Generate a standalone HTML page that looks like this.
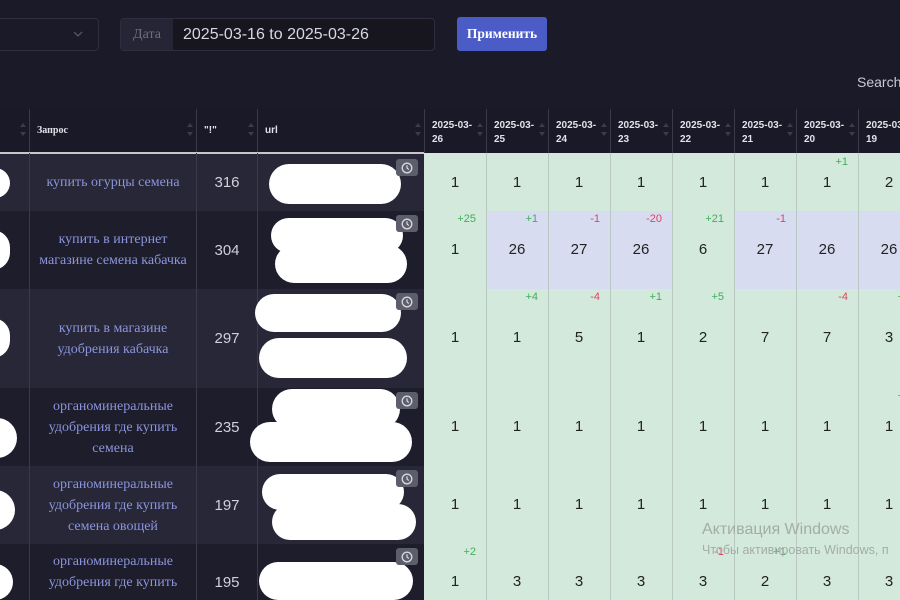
<!DOCTYPE html>
<html><head><meta charset="utf-8"><style>
*{margin:0;padding:0;box-sizing:border-box}
html,body{width:900px;height:600px;overflow:hidden}
body{background:#1b1a28;font-family:"Liberation Sans","DejaVu Sans",sans-serif;position:relative}
.a{position:absolute}
.sel{left:-10px;top:18px;width:109px;height:33px;border:1px solid #2e2e3e;border-radius:4px;background:#1b1a28}
.dg{left:120px;top:18px;width:315px;height:33px;border:1px solid #2e2e3e;border-radius:4px;background:#17161f;overflow:hidden}
.dl{left:0;top:0;width:52px;height:100%;background:#252535;color:#6d6e80;font-family:"Liberation Serif",serif;font-size:14px;line-height:31px;text-align:center}
.dv{left:62px;top:0;color:#d6d7e2;font-size:16px;line-height:31px}
.btn{left:457px;top:17px;width:90px;height:34px;background:#4b5cc6;border-radius:3px;color:#fff;font-family:"Liberation Serif",serif;font-weight:bold;font-size:13.5px;line-height:34px;text-align:center}
.srch{left:857px;top:74px;color:#c8c9d6;font-size:14px}
.hd{top:109px;height:44px;background:#1a1927;border-left:1px solid #3a3a48;color:#e2e2ea;font-size:10px;font-weight:bold}
.hd span{position:absolute;left:7px;top:10px;line-height:14px}
.sort{position:absolute;right:9px;top:15px;width:0;height:0}
.sort:before{content:"";position:absolute;left:0;top:0;border:3px solid transparent;border-bottom:4px solid #3c3c4a;transform:translateY(-4px)}
.sort:after{content:"";position:absolute;left:0;top:8px;border:3px solid transparent;border-top:4px solid #3c3c4a}
.line{left:0;top:152px;width:424px;height:1.5px;background:#c6c6cc}
.c{border-left:1px solid #3a3a48}
.q{color:#8b95dd;font-family:"Liberation Serif",serif;font-size:14px;line-height:21px;text-align:center;display:flex;align-items:center;justify-content:center;overflow:hidden}
.n{color:#d0d1dc;font-size:15px;display:flex;align-items:center;justify-content:center}
.v{color:#222;font-size:15px;width:62px;text-align:center}
.d{font-size:11px;width:50px;text-align:right}
.p{color:#3fae5c}.m{color:#e0445a}
.blob{background:#fff;border-radius:30px}
.clk{width:22px;height:17px;background:#5d5e6b;border-radius:3px}
.clk svg{position:absolute;left:5px;top:2.5px}
.win{color:#a4aca7}
</style></head><body>
<div class="a sel"><svg class="a" style="left:82px;top:12px" width="10" height="7"><path d="M1 1L5 5L9 1" stroke="#555566" fill="none" stroke-width="1.3"/></svg></div>
<div class="a dg"><div class="a dl">Дата</div><div class="a dv">2025-03-16 to 2025-03-26</div></div>
<div class="a btn">Применить</div>
<div class="a srch">Search</div>

<div class="a hd" style="left:-1px;width:30px"><div class="sort"></div></div>
<div class="a hd" style="left:29px;width:167px"><span style="font-family:'Liberation Serif',serif;top:15px">Запрос</span><div class="sort"></div></div>
<div class="a hd" style="left:196px;width:61px"><span style="top:15px">"!"</span><div class="sort"></div></div>
<div class="a hd" style="left:257px;width:167px"><span style="top:15px">url</span><div class="sort"></div></div>
<div class="a hd" style="left:424px;width:62px"><span>2025-03-<br>26</span><div class="sort"></div></div>
<div class="a hd" style="left:486px;width:62px"><span>2025-03-<br>25</span><div class="sort"></div></div>
<div class="a hd" style="left:548px;width:62px"><span>2025-03-<br>24</span><div class="sort"></div></div>
<div class="a hd" style="left:610px;width:62px"><span>2025-03-<br>23</span><div class="sort"></div></div>
<div class="a hd" style="left:672px;width:62px"><span>2025-03-<br>22</span><div class="sort"></div></div>
<div class="a hd" style="left:734px;width:62px"><span>2025-03-<br>21</span><div class="sort"></div></div>
<div class="a hd" style="left:796px;width:62px"><span>2025-03-<br>20</span><div class="sort"></div></div>
<div class="a hd" style="left:858px;width:62px"><span>2025-03-<br>19</span><div class="sort"></div></div>
<div class="a line"></div>

<div class="a" style="left:0;top:153.5px;width:424px;height:57.5px;background:#272737"></div>
<div class="a" style="left:0;top:211px;width:424px;height:78px;background:#1e1d2b"></div>
<div class="a" style="left:0;top:289px;width:424px;height:99px;background:#272737"></div>
<div class="a" style="left:0;top:388px;width:424px;height:78px;background:#1e1d2b"></div>
<div class="a" style="left:0;top:466px;width:424px;height:78px;background:#272737"></div>
<div class="a" style="left:0;top:544px;width:424px;height:56px;background:#1e1d2b"></div>
<div class="a c" style="left:29px;top:153px;width:1px;height:447px"></div>
<div class="a c" style="left:196px;top:153px;width:1px;height:447px"></div>
<div class="a c" style="left:257px;top:153px;width:1px;height:447px"></div>

<div class="a q" style="left:30px;top:153px;width:166px;height:58px">купить огурцы семена</div>
<div class="a q" style="left:30px;top:211px;width:166px;height:78px">купить в интернет<br>магазине семена кабачка</div>
<div class="a q" style="left:30px;top:289px;width:166px;height:99px">купить в магазине<br>удобрения кабачка</div>
<div class="a q" style="left:30px;top:388px;width:166px;height:78px">органоминеральные<br>удобрения где купить<br>семена</div>
<div class="a q" style="left:30px;top:466px;width:166px;height:78px">органоминеральные<br>удобрения где купить<br>семена овощей</div>
<div class="a q" style="left:30px;top:544px;width:166px;height:56px;align-items:flex-start;padding-top:7px">органоминеральные<br>удобрения где купить</div>

<div class="a n" style="left:197px;top:153px;width:60px;height:58px">316</div>
<div class="a n" style="left:197px;top:211px;width:60px;height:78px">304</div>
<div class="a n" style="left:197px;top:289px;width:60px;height:99px">297</div>
<div class="a n" style="left:197px;top:388px;width:60px;height:78px">235</div>
<div class="a n" style="left:197px;top:466px;width:60px;height:78px">197</div>
<div class="a n" style="left:197px;top:572px;width:60px;height:20px">195</div>

<div class="a blob" style="left:-20px;top:168px;width:30px;height:30px"></div>
<div class="a blob" style="left:-25px;top:230px;width:35px;height:40px"></div>
<div class="a blob" style="left:-25px;top:318px;width:35px;height:40px"></div>
<div class="a blob" style="left:-25px;top:418px;width:42px;height:40px"></div>
<div class="a blob" style="left:-25px;top:490px;width:40px;height:40px"></div>
<div class="a blob" style="left:-25px;top:564px;width:38px;height:36px"></div>
<div class="a blob" style="left:269px;top:164px;width:132px;height:40px"></div>
<div class="a blob" style="left:271px;top:218px;width:132px;height:35px"></div>
<div class="a blob" style="left:275px;top:245px;width:132px;height:38px"></div>
<div class="a blob" style="left:255px;top:294px;width:146px;height:38px"></div>
<div class="a blob" style="left:259px;top:338px;width:148px;height:40px"></div>
<div class="a blob" style="left:272px;top:389px;width:128px;height:40px"></div>
<div class="a blob" style="left:250px;top:422px;width:162px;height:40px"></div>
<div class="a blob" style="left:262px;top:474px;width:142px;height:36px"></div>
<div class="a blob" style="left:272px;top:504px;width:144px;height:36px"></div>
<div class="a blob" style="left:259px;top:562px;width:154px;height:38px"></div>

<div class="a clk" style="left:396px;top:159px"><svg width="12" height="12" viewBox="0 0 12 12"><circle cx="6" cy="6" r="4.8" fill="none" stroke="#d8d8e0" stroke-width="1.3"/><path d="M6 3.3V6L7.8 7.6" fill="none" stroke="#d8d8e0" stroke-width="1.2"/></svg></div>
<div class="a clk" style="left:396px;top:215px"><svg width="12" height="12" viewBox="0 0 12 12"><circle cx="6" cy="6" r="4.8" fill="none" stroke="#d8d8e0" stroke-width="1.3"/><path d="M6 3.3V6L7.8 7.6" fill="none" stroke="#d8d8e0" stroke-width="1.2"/></svg></div>
<div class="a clk" style="left:396px;top:293px"><svg width="12" height="12" viewBox="0 0 12 12"><circle cx="6" cy="6" r="4.8" fill="none" stroke="#d8d8e0" stroke-width="1.3"/><path d="M6 3.3V6L7.8 7.6" fill="none" stroke="#d8d8e0" stroke-width="1.2"/></svg></div>
<div class="a clk" style="left:396px;top:392px"><svg width="12" height="12" viewBox="0 0 12 12"><circle cx="6" cy="6" r="4.8" fill="none" stroke="#d8d8e0" stroke-width="1.3"/><path d="M6 3.3V6L7.8 7.6" fill="none" stroke="#d8d8e0" stroke-width="1.2"/></svg></div>
<div class="a clk" style="left:396px;top:470px"><svg width="12" height="12" viewBox="0 0 12 12"><circle cx="6" cy="6" r="4.8" fill="none" stroke="#d8d8e0" stroke-width="1.3"/><path d="M6 3.3V6L7.8 7.6" fill="none" stroke="#d8d8e0" stroke-width="1.2"/></svg></div>
<div class="a clk" style="left:396px;top:548px"><svg width="12" height="12" viewBox="0 0 12 12"><circle cx="6" cy="6" r="4.8" fill="none" stroke="#d8d8e0" stroke-width="1.3"/><path d="M6 3.3V6L7.8 7.6" fill="none" stroke="#d8d8e0" stroke-width="1.2"/></svg></div>

<div class="a" style="left:424px;top:153px;width:476px;height:447px;background:#d3e9dc"></div>
<div class="a" style="left:486px;top:211px;width:186px;height:78px;background:#d7dcf1"></div>
<div class="a" style="left:734px;top:211px;width:186px;height:78px;background:#d7dcf1"></div>
<div class="a" style="left:486px;top:153px;width:1px;height:447px;background:#b9c9c1"></div>
<div class="a" style="left:548px;top:153px;width:1px;height:447px;background:#b9c9c1"></div>
<div class="a" style="left:610px;top:153px;width:1px;height:447px;background:#b9c9c1"></div>
<div class="a" style="left:672px;top:153px;width:1px;height:447px;background:#b9c9c1"></div>
<div class="a" style="left:734px;top:153px;width:1px;height:447px;background:#b9c9c1"></div>
<div class="a" style="left:796px;top:153px;width:1px;height:447px;background:#b9c9c1"></div>
<div class="a" style="left:858px;top:153px;width:1px;height:447px;background:#b9c9c1"></div>

<div class="a v" style="left:424px;top:174px">1</div><div class="a v" style="left:486px;top:174px">1</div><div class="a v" style="left:548px;top:174px">1</div><div class="a v" style="left:610px;top:174px">1</div><div class="a v" style="left:672px;top:174px">1</div><div class="a v" style="left:734px;top:174px">1</div><div class="a v" style="left:796px;top:174px">1</div><div class="a v" style="left:858px;top:174px">2</div>
<div class="a d p" style="left:798px;top:156px">+1</div>
<div class="a v" style="left:424px;top:241px">1</div><div class="a v" style="left:486px;top:241px">26</div><div class="a v" style="left:548px;top:241px">27</div><div class="a v" style="left:610px;top:241px">26</div><div class="a v" style="left:672px;top:241px">6</div><div class="a v" style="left:734px;top:241px">27</div><div class="a v" style="left:796px;top:241px">26</div><div class="a v" style="left:858px;top:241px">26</div>
<div class="a d p" style="left:426px;top:213px">+25</div><div class="a d p" style="left:488px;top:213px">+1</div><div class="a d m" style="left:550px;top:213px">-1</div><div class="a d m" style="left:612px;top:213px">-20</div><div class="a d p" style="left:674px;top:213px">+21</div><div class="a d m" style="left:736px;top:213px">-1</div><div class="a d m" style="left:860px;top:213px">-1</div>
<div class="a v" style="left:424px;top:329px">1</div><div class="a v" style="left:486px;top:329px">1</div><div class="a v" style="left:548px;top:329px">5</div><div class="a v" style="left:610px;top:329px">1</div><div class="a v" style="left:672px;top:329px">2</div><div class="a v" style="left:734px;top:329px">7</div><div class="a v" style="left:796px;top:329px">7</div><div class="a v" style="left:858px;top:329px">3</div>
<div class="a d p" style="left:488px;top:291px">+4</div><div class="a d m" style="left:550px;top:291px">-4</div><div class="a d p" style="left:612px;top:291px">+1</div><div class="a d p" style="left:674px;top:291px">+5</div><div class="a d m" style="left:798px;top:291px">-4</div><div class="a d p" style="left:860px;top:291px">+1</div>
<div class="a v" style="left:424px;top:418px">1</div><div class="a v" style="left:486px;top:418px">1</div><div class="a v" style="left:548px;top:418px">1</div><div class="a v" style="left:610px;top:418px">1</div><div class="a v" style="left:672px;top:418px">1</div><div class="a v" style="left:734px;top:418px">1</div><div class="a v" style="left:796px;top:418px">1</div><div class="a v" style="left:858px;top:418px">1</div>
<div class="a d p" style="left:860px;top:390px">+1</div>
<div class="a v" style="left:424px;top:496px">1</div><div class="a v" style="left:486px;top:496px">1</div><div class="a v" style="left:548px;top:496px">1</div><div class="a v" style="left:610px;top:496px">1</div><div class="a v" style="left:672px;top:496px">1</div><div class="a v" style="left:734px;top:496px">1</div><div class="a v" style="left:796px;top:496px">1</div><div class="a v" style="left:858px;top:496px">1</div>
<div class="a v" style="left:424px;top:573px">1</div><div class="a v" style="left:486px;top:573px">3</div><div class="a v" style="left:548px;top:573px">3</div><div class="a v" style="left:610px;top:573px">3</div><div class="a v" style="left:672px;top:573px">3</div><div class="a v" style="left:734px;top:573px">2</div><div class="a v" style="left:796px;top:573px">3</div><div class="a v" style="left:858px;top:573px">3</div>
<div class="a d p" style="left:426px;top:546px">+2</div><div class="a d m" style="left:674px;top:546px">-1</div><div class="a d p" style="left:736px;top:546px">+1</div>

<div class="a win" style="left:702px;top:521px;font-size:16px">Активация Windows</div>
<div class="a win" style="left:702px;top:543px;font-size:12.5px;white-space:nowrap">Чтобы активировать Windows, п</div>
</body></html>
